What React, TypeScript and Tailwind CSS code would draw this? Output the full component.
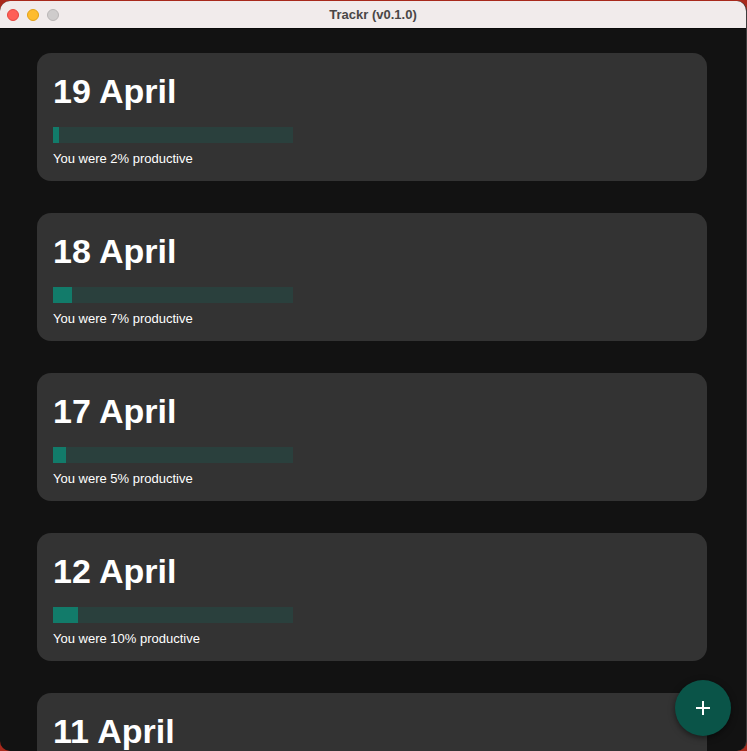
import React from "react";

const days = [
  { title: "19 April", pct: 2, fill: 6 },
  { title: "18 April", pct: 7, fill: 19 },
  { title: "17 April", pct: 5, fill: 13 },
  { title: "12 April", pct: 10, fill: 25 },
  { title: "11 April", pct: 4, fill: 11 },
];

export default function App() {
  return (
    <div
      className="w-[747px] h-[751px] bg-[#a8291c] overflow-hidden pt-[1px]"
      style={{ fontFamily: '"Liberation Sans", Arial, sans-serif' }}
    >
      <div className="relative h-[750px] rounded-[10px] overflow-hidden bg-[#121212] border-r border-[#3c3c3c] flex flex-col">
        <div className="h-[28px] shrink-0 bg-[#f1ebeb] border-b border-[#0a0a0a] flex items-center relative">
          <div className="flex items-center gap-[8px] pl-[7px]">
            <span className="w-[12px] h-[12px] rounded-full bg-[#fe5f57] border border-[#e2463f]" />
            <span className="w-[12px] h-[12px] rounded-full bg-[#febc2e] border border-[#e1a116]" />
            <span className="w-[12px] h-[12px] rounded-full bg-[#cfcccc] border border-[#b9b6b6]" />
          </div>
          <div className="absolute inset-0 flex items-center justify-center text-[13px] font-bold text-[#4a4646]">
            Trackr (v0.1.0)
          </div>
        </div>
        <div className="flex-1 overflow-hidden px-[37px] pt-[24px] pr-[39px] flex flex-col gap-[32px]">
          {days.map((d) => (
            <div key={d.title} className="shrink-0 bg-[#333333] rounded-[14px] px-[16px] pt-[19px] pb-[14px]">
              <div className="text-[34px] leading-[38px] font-bold text-white">{d.title}</div>
              <div className="mt-[17px] w-[240px] h-[16px] bg-[#2a403d] flex">
                <div className="h-full bg-[#127b6a]" style={{ width: d.fill }} />
              </div>
              <div className="mt-[8px] text-[13px] leading-[16px] text-white">
                You were {d.pct}% productive
              </div>
            </div>
          ))}
        </div>
        <button className="absolute right-[15px] bottom-[15px] w-[56px] h-[56px] rounded-full bg-[#0a5448] flex items-center justify-center shadow-[0_2px_6px_rgba(0,0,0,0.5)]">
          <svg width="16" height="16" viewBox="0 0 16 16">
            <path d="M8 1v14M1 8h14" stroke="white" strokeWidth="2" />
          </svg>
        </button>
      </div>
    </div>
  );
}
